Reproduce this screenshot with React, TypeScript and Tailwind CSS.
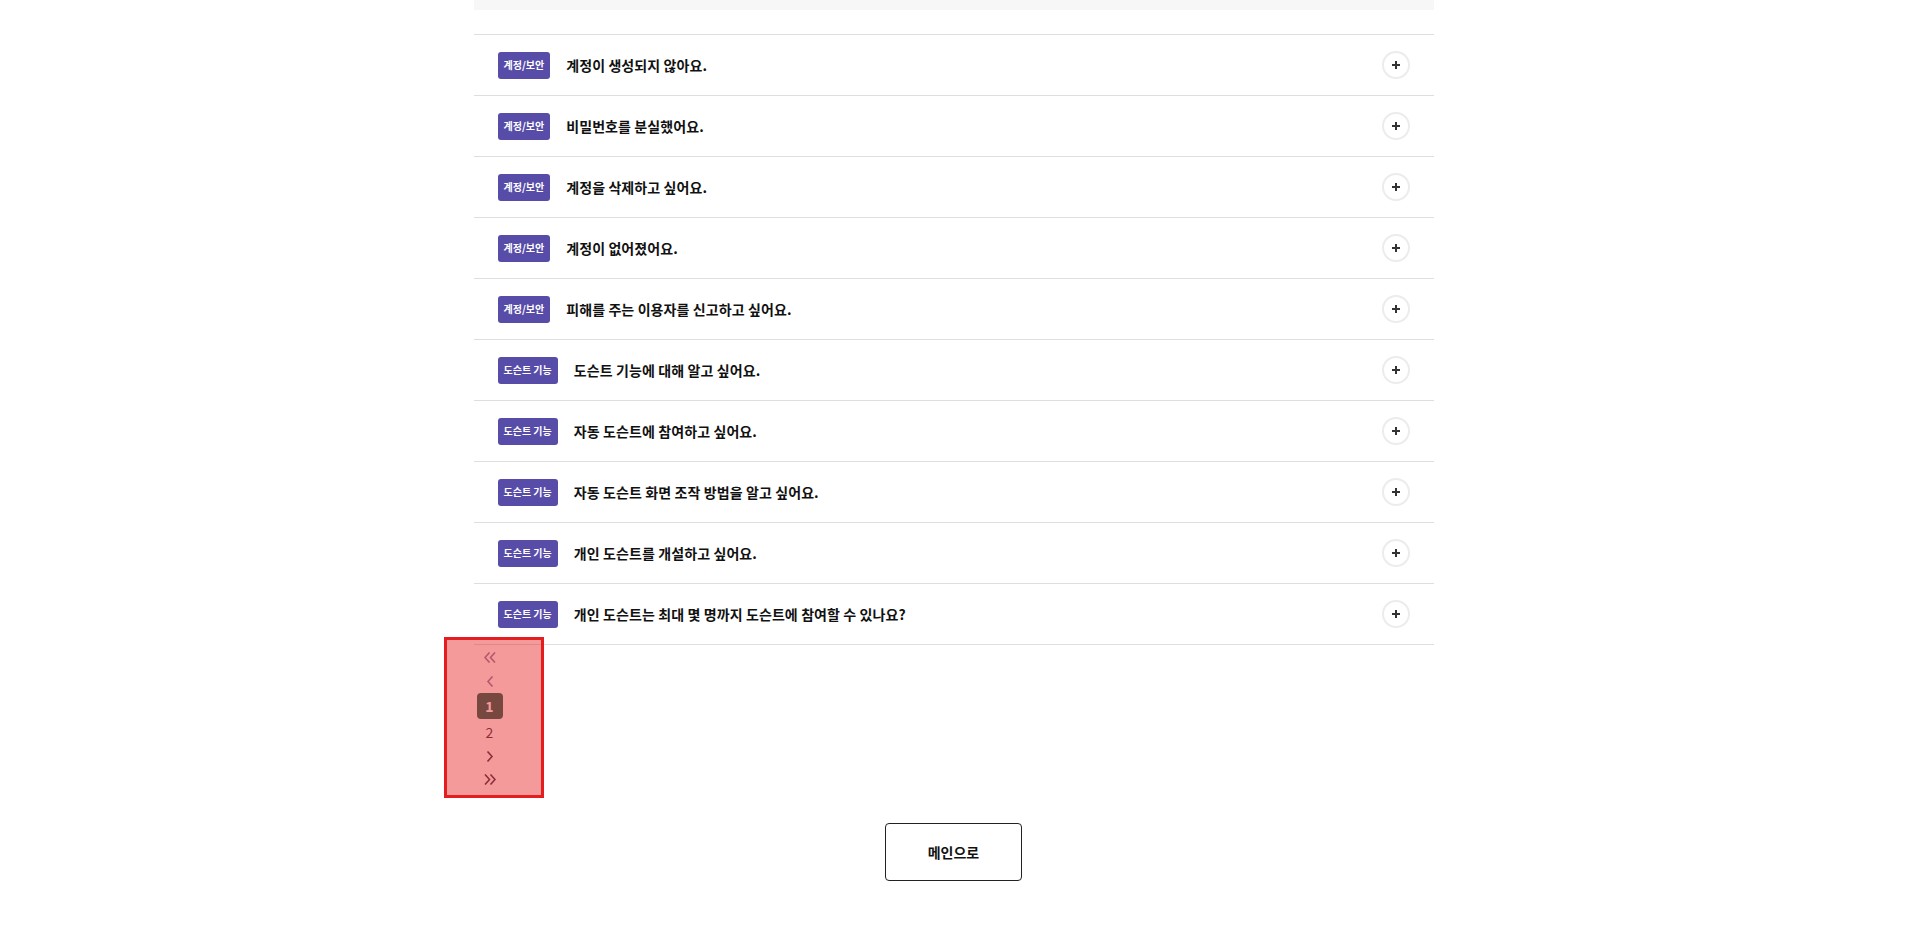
import React from "react";

const items: { cat: string; q: string }[] = [
  { cat: "계정/보안", q: "계정이 생성되지 않아요." },
  { cat: "계정/보안", q: "비밀번호를 분실했어요." },
  { cat: "계정/보안", q: "계정을 삭제하고 싶어요." },
  { cat: "계정/보안", q: "계정이 없어졌어요." },
  { cat: "계정/보안", q: "피해를 주는 이용자를 신고하고 싶어요." },
  { cat: "도슨트 기능", q: "도슨트 기능에 대해 알고 싶어요." },
  { cat: "도슨트 기능", q: "자동 도슨트에 참여하고 싶어요." },
  { cat: "도슨트 기능", q: "자동 도슨트 화면 조작 방법을 알고 싶어요." },
  { cat: "도슨트 기능", q: "개인 도슨트를 개설하고 싶어요." },
  { cat: "도슨트 기능", q: "개인 도슨트는 최대 몇 명까지 도슨트에 참여할 수 있나요?" },
];

function Plus() {
  return (
    <div className="w-[28px] h-[28px] rounded-full border-2 border-[#ececec] flex items-center justify-center">
      <svg width="10" height="10" viewBox="0 0 10 10">
        <path d="M5 1v8M1 5h8" stroke="#333" strokeWidth="2" strokeLinecap="butt" />
      </svg>
    </div>
  );
}

export default function App() {
  return (
    <div
      className="w-full min-h-[944px] bg-white"
      style={{ fontFamily: '"Noto Sans CJK KR", "Noto Sans", sans-serif' }}
    >
      <div className="w-[960px] mx-auto">
        <div className="h-[10px] bg-[#f7f7f7]" />
        <ul className="mt-[24px] border-t border-[#dedede]">
          {items.map((it, i) => (
            <li
              key={i}
              className="h-[61px] border-b border-[#dedede] flex items-center pl-[24px] pr-[24px]"
            >
              <span className="h-[27px] px-[6px] rounded-[3px] bg-[#574ca8] text-white text-[10px] font-bold flex items-center leading-none">
                {it.cat}
              </span>
              <span className="ml-[16px] text-[14px] font-bold text-[#111] flex-1 tracking-[0.1px]">
                {it.q}
              </span>
              <Plus />
            </li>
          ))}
        </ul>
        <div className="relative">
          <ul className="ml-[3px] w-[26px] flex flex-col items-center text-[14px]">
            <li className="h-[24px] flex items-center justify-center text-[#8788a8]">
              <svg width="12" height="11" viewBox="0 0 12 11">
                <path d="M5.5 0.5L1 5.5l4.5 5M11 0.5L6.5 5.5l4.5 5" stroke="currentColor" strokeWidth="1.6" fill="none" />
              </svg>
            </li>
            <li className="h-[24px] flex items-center justify-center text-[#8788a8]">
              <svg width="8" height="11" viewBox="0 0 8 11">
                <path d="M6.5 0.5L2 5.5l4.5 5" stroke="currentColor" strokeWidth="1.6" fill="none" />
              </svg>
            </li>
            <li className="h-[26px] w-[26px] rounded-[4px] bg-[#1b6a5c] text-white font-bold flex items-center justify-center">
              1
            </li>
            <li className="h-[26px] flex items-center justify-center text-[#3d3e50]">2</li>
            <li className="h-[22px] flex items-center justify-center text-[#3d3e50]">
              <svg width="8" height="11" viewBox="0 0 8 11">
                <path d="M1.5 0.5L6 5.5l-4.5 5" stroke="currentColor" strokeWidth="1.6" fill="none" />
              </svg>
            </li>
            <li className="h-[24px] flex items-center justify-center text-[#3d3e50]">
              <svg width="12" height="11" viewBox="0 0 12 11">
                <path d="M1 0.5L5.5 5.5 1 10.5M6.5 0.5L11 5.5l-4.5 5" stroke="currentColor" strokeWidth="1.6" fill="none" />
              </svg>
            </li>
          </ul>
          <div className="absolute left-[-30px] top-[-8px] w-[100px] h-[161px] border-[3px] border-[#e41e1e] bg-[rgba(232,32,32,0.45)] pointer-events-none" />
        </div>
        <div className="flex justify-center mt-[32px]">
          <button className="w-[137px] h-[58px] border border-[#222] rounded-[4px] bg-white text-[14px] font-semibold text-[#111]">
            메인으로
          </button>
        </div>
      </div>
    </div>
  );
}
